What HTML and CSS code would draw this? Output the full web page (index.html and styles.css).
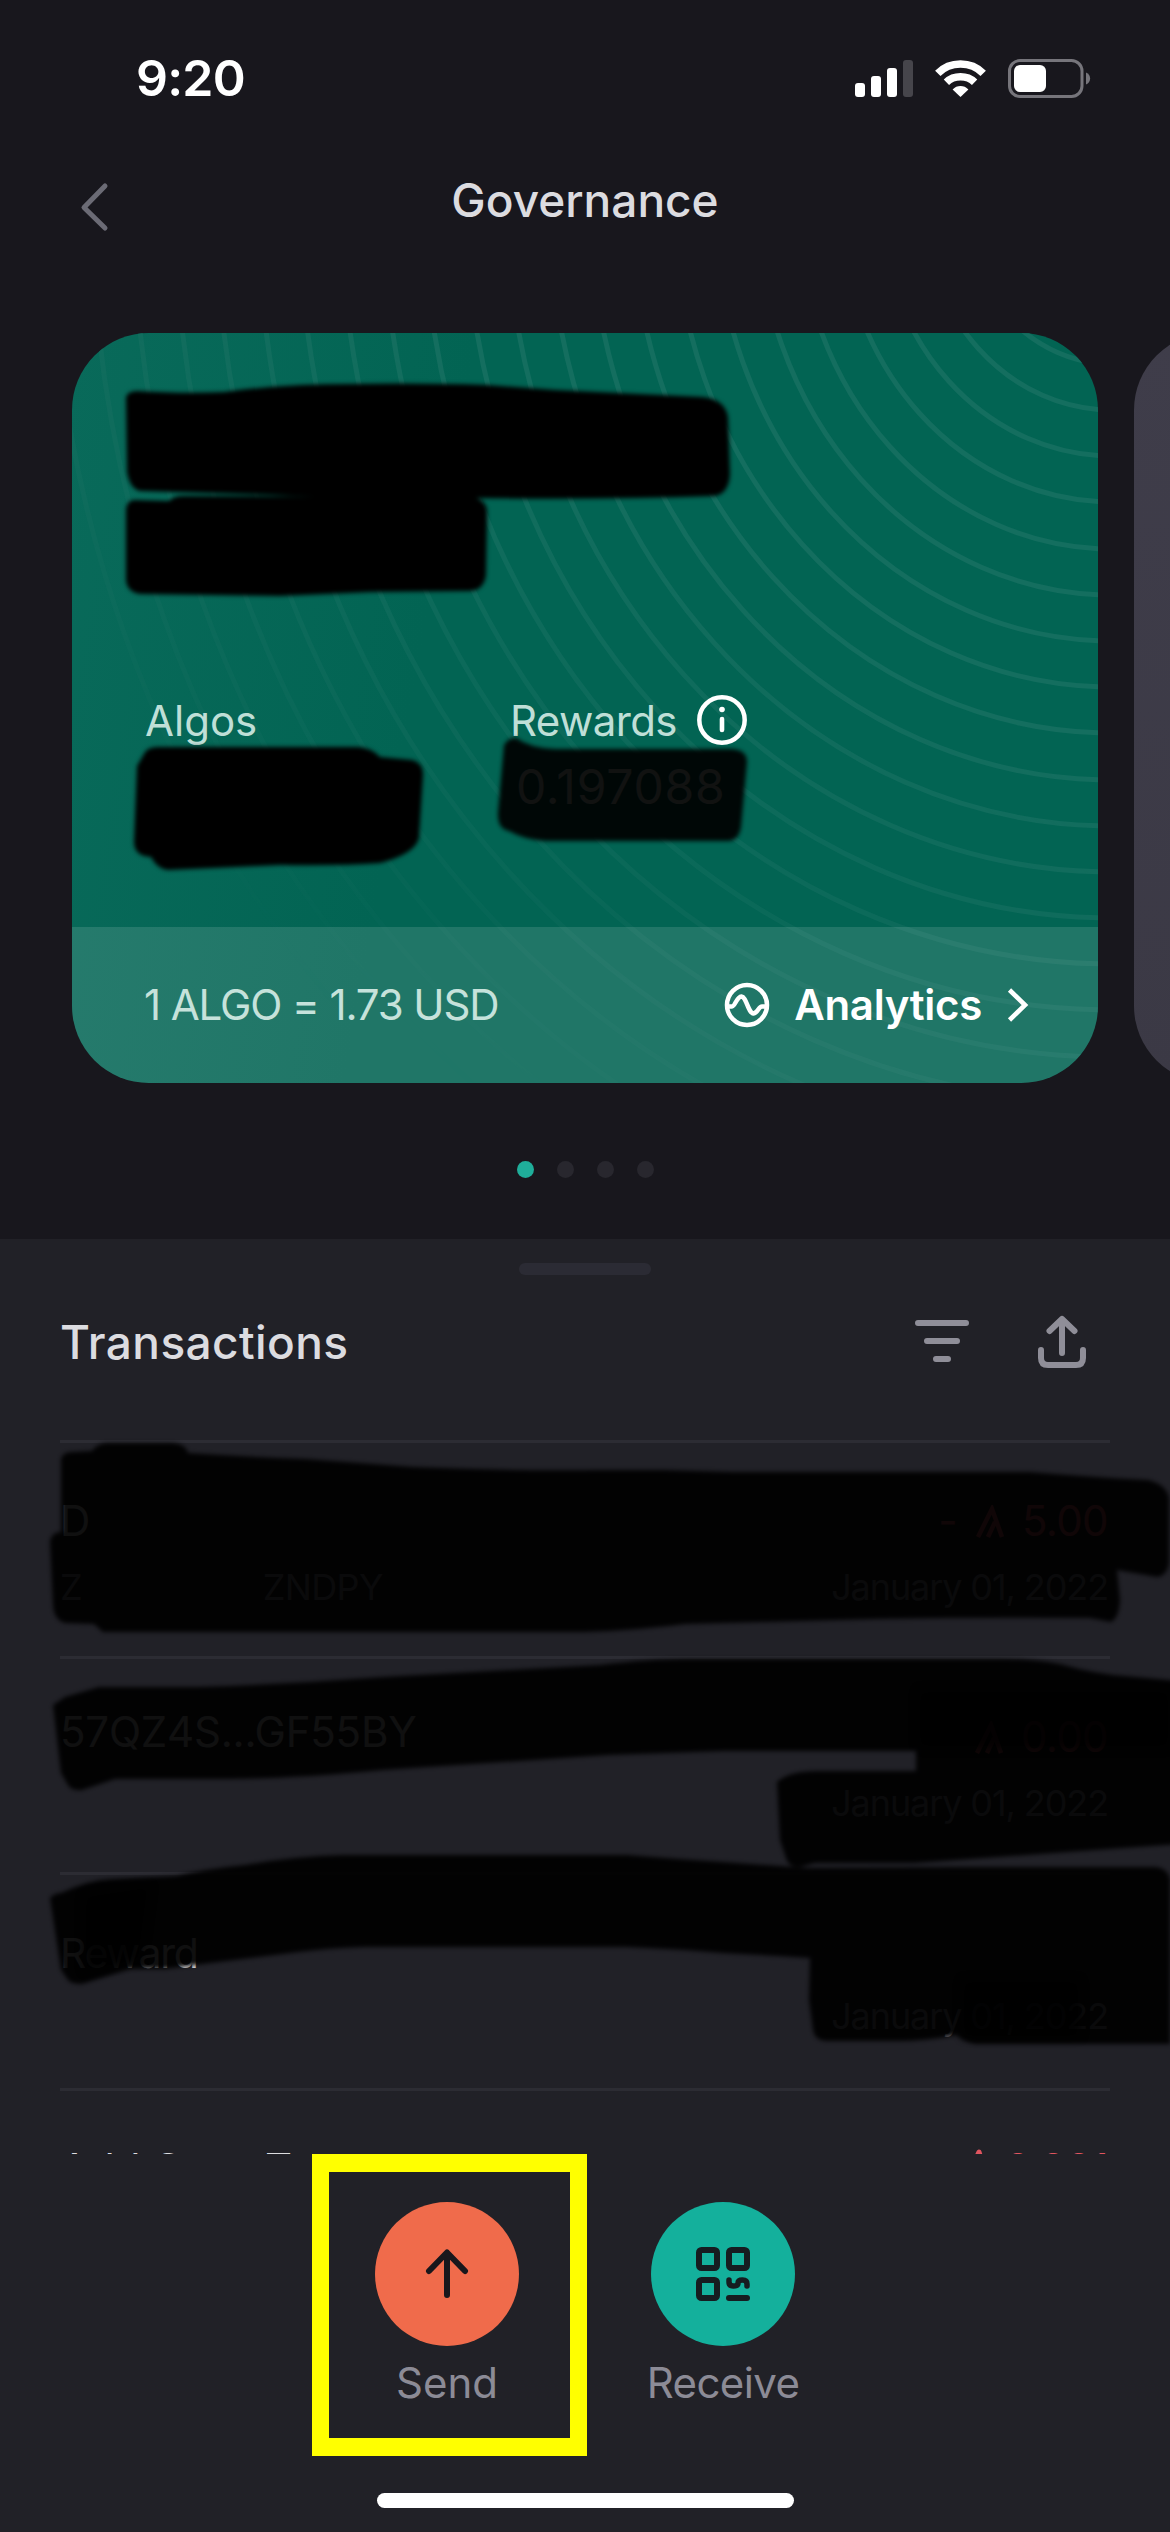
FILE: index.html
```html
<!DOCTYPE html>
<html lang="en">
<head>
<meta charset="utf-8">
<title>Governance</title>
<link rel="stylesheet" href="styles.css">
</head>
<body>
<div class="screen">
  <header class="status">
    <span class="time">9:20</span>
    <div class="status-icons">
      <svg class="signal" width="58" height="37" viewBox="0 0 58 37"><g fill="#fff"><rect x="0" y="23" width="10" height="14" rx="3"/><rect x="16" y="16" width="10" height="21" rx="3"/><rect x="32" y="8" width="10" height="29" rx="3"/></g><rect x="48" y="0" width="10" height="37" rx="3" fill="#46454b"/></svg>
      <svg class="wifi" width="51" height="37" viewBox="0 0 51 37"><g fill="none" stroke="#fff" stroke-width="7.6"><path d="M2.8 13.3Q12 4 25.5 4T48.2 13.3"/><path d="M11.4 22.2Q17 16.8 25.5 16.8T39.6 22.2"/></g><path d="M17.6 29.4Q21 26 25.5 26T33.4 29.4L25.5 37Z" fill="#fff"/></svg>
      <svg class="battery" width="83" height="39" viewBox="0 0 83 39"><rect x="1.5" y="1.5" width="72.500" height="36" rx="10.500" fill="none" stroke="#76757b" stroke-width="3"/><rect x="6" y="6" width="32" height="27" rx="6" fill="#fff"/><path d="M78 13.500C83.500 15.500 83.500 23.500 78 25.500Z" fill="#76757b"/></svg>
    </div>
  </header>

  <nav class="nav">
    <svg class="back" width="30" height="50" viewBox="0 0 30 50"><path d="M26 4L5 25.500L26 46" fill="none" stroke="#6b6b75" stroke-width="5" stroke-linecap="round" stroke-linejoin="round"/></svg>
    <h1 class="nav-title">Governance</h1>
  </nav>

  <section class="carousel">
    <article class="card">
      <svg class="rings" width="1026" height="750" viewBox="0 0 1026 750">
        <defs>
        <mask id="ringMask"><rect width="1026" height="750" fill="url(#maskFade)"/></mask>
        <linearGradient id="maskFade" gradientUnits="userSpaceOnUse" x1="260" y1="750" x2="620" y2="180"><stop offset="0.1" stop-color="#000"/><stop offset="1" stop-color="#fff"/></linearGradient></defs>
        <g class="ring-lines" mask="url(#ringMask)">
          <ellipse cx="1040" cy="-133" rx="148" ry="164"/><ellipse cx="1040" cy="-133" rx="189" ry="210"/><ellipse cx="1040" cy="-133" rx="231" ry="256"/><ellipse cx="1040" cy="-133" rx="272" ry="302"/><ellipse cx="1040" cy="-133" rx="314" ry="349"/><ellipse cx="1040" cy="-133" rx="355" ry="395"/><ellipse cx="1040" cy="-133" rx="397" ry="441"/><ellipse cx="1040" cy="-133" rx="438" ry="487"/><ellipse cx="1040" cy="-133" rx="480" ry="533"/><ellipse cx="1040" cy="-133" rx="522" ry="580"/><ellipse cx="1040" cy="-133" rx="563" ry="626"/><ellipse cx="1040" cy="-133" rx="605" ry="672"/><ellipse cx="1040" cy="-133" rx="646" ry="718"/><ellipse cx="1040" cy="-133" rx="688" ry="764"/><ellipse cx="1040" cy="-133" rx="729" ry="810"/><ellipse cx="1040" cy="-133" rx="771" ry="857"/><ellipse cx="1040" cy="-133" rx="813" ry="903"/><ellipse cx="1040" cy="-133" rx="854" ry="949"/><ellipse cx="1040" cy="-133" rx="896" ry="995"/><ellipse cx="1040" cy="-133" rx="937" ry="1041"/><ellipse cx="1040" cy="-133" rx="979" ry="1088"/><ellipse cx="1040" cy="-133" rx="1020" ry="1134"/><ellipse cx="1040" cy="-133" rx="1062" ry="1180"/>
        </g>
      </svg>
      <div class="card-body">
        <div class="metric">
          <div class="metric-label"><span>Algos</span></div>
        </div>
        <div class="metric">
          <div class="metric-label"><span class="t-rewards">Rewards</span>
            <svg class="info" width="50" height="50" viewBox="0 0 50 50"><circle cx="25" cy="25" r="22.700" fill="none" stroke="#fff" stroke-width="4.500"/><circle cx="25" cy="14.500" r="2.800" fill="#fff"/><path d="M25 24V35" stroke="#fff" stroke-width="4.600" stroke-linecap="round"/></svg>
          </div>
          <div class="metric-value">0.197088</div>
        </div>
      </div>
      <footer class="card-foot">
        <span class="rate">1 ALGO = 1.73 USD</span>
        <div class="analytics">
          <svg width="46" height="46" viewBox="0 0 46 46"><g fill="none" stroke="#fff" stroke-width="4.500" stroke-linejoin="round"><circle cx="23" cy="23" r="20"/><path d="M4 24.500H8C11 24.500 12.500 15 17.500 14.500C22.500 15 24 31 29.500 31.500C34 31 34.500 24.500 38 24.500H42"/></g></svg>
          <span class="analytics-label">Analytics</span>
          <svg width="22" height="34" viewBox="0 0 22 34"><path d="M2.500 2L18 17L2.500 32" fill="none" stroke="#fff" stroke-width="4.600"/></svg>
        </div>
      </footer>
    </article>
    <article class="card next"></article>
  </section>

  <div class="dots"><i class="dot on"></i><i class="dot"></i><i class="dot"></i><i class="dot"></i></div>

  <main class="sheet">
    <div class="handle"></div>
    <div class="sheet-head">
      <h2 class="sheet-title">Transactions</h2>
      <div class="tools">
        <svg width="54" height="54" viewBox="0 0 54 54"><g stroke="#8f8e98" stroke-width="6" stroke-linecap="round"><path d="M3 8H51M12 26H42M21 44H33"/></g></svg>
        <svg width="48" height="56" viewBox="0 0 48 56"><g fill="none" stroke="#8f8e98" stroke-width="6" stroke-linecap="round" stroke-linejoin="round"><path d="M24 39V6M11.500 17L24 5L36.500 17"/><path d="M3 36V44Q3 51 10 51H38Q45 51 45 44V36"/></g></svg>
      </div>
    </div>
    <div class="list">
      <div class="row">
        <div class="who"><span class="name">D</span><span class="sub"><span>Z</span><span class="tail">ZNDPY</span></span></div>
        <div class="what"><span class="amount"><span class="minus">-</span><svg width="29" height="33" viewBox="0 0 29 33"><path d="M2 32L16 4L26 32M12 32L19 17" fill="none" stroke="#e0555f" stroke-width="4.500"/></svg><span>5.00</span></span><span class="date">January 01, 2022</span></div>
      </div>
      <div class="row">
        <div class="who single"><span class="name addr">57QZ4S...GF55BY</span></div>
        <div class="what"><span class="amount"><svg width="29" height="33" viewBox="0 0 29 33"><path d="M2 32L16 4L26 32M12 32L19 17" fill="none" stroke="#e0555f" stroke-width="4.500"/></svg><span>0.00</span></span><span class="date">January 01, 2022</span></div>
      </div>
      <div class="row raised">
        <div class="who"><span class="name reward">Reward</span></div>
        <div class="what"><span class="amount"></span><span class="date">January 01, 2022</span></div>
      </div>
      <div class="row">
        <div class="who"><span class="name cut"><span>Add C</span><span class="second">T</span></span></div>
        <div class="what"><span class="amount"><svg class="peek" width="29" height="36" viewBox="0 0 29 36"><path d="M2 35L16 4L26 35M12 35L19 18" fill="none" stroke="#e0555f" stroke-width="5" stroke-linejoin="round"/></svg><span>0.001</span></span></div>
      </div>
    </div>
  </main>

  <div class="actions">
    <div class="action">
      <div class="round send"><svg width="48" height="54" viewBox="0 0 48 54"><path d="M24 48V6M6 24L24 5.500L42 24" fill="none" stroke="#19171c" stroke-width="6" stroke-linecap="round" stroke-linejoin="round"/></svg></div>
      <span class="action-label">Send</span>
      <div class="highlight"></div>
    </div>
    <div class="action">
      <div class="round receive"><svg width="54" height="54" viewBox="0 0 54 54"><g fill="none" stroke="#161c20" stroke-width="6" stroke-linecap="round" stroke-linejoin="round"><rect x="3" y="3" width="18" height="18" rx="2.500"/><rect x="33" y="3" width="18" height="18" rx="2.500"/><rect x="3" y="33" width="18" height="18" rx="2.500"/><path d="M33 51H51"/><path d="M33 33V35Q33 39 37.500 39T42 36T46.500 33T51 37V39" stroke-width="5.500"/></g></svg></div>
      <span class="action-label t-receive">Receive</span>
    </div>
  </div>

  <div class="home"></div>

  <svg class="marker" width="1170" height="2532" viewBox="0 0 1170 2532">
    <g class="ink solid">
      <path d="M126 397Q128 391 137 391Q185 394 224 392Q260 387 302 385Q400 382 486 385L555 390L702 397Q725 399 728 417L730 474Q729 494 714 496Q600 500 463 498Q360 500 270 495L140 491Q130 489 127 472Z"/>
      <path d="M126 509Q127 500 135 500L169 501Q174 496 183 496L472 497Q487 500 487 512L486 575Q484 590 470 591L371 592L280 596L140 594Q127 592 126 580Z"/>
      <path d="M144 754Q147 747 158 747H358Q372 748 380 757L412 760Q424 763 423 776L419 838Q415 854 380 863Q340 866 280 865L168 870Q157 869 151 857Q134 856 134 842L137 766Z"/>
    </g>
    <g class="ink">
      <path d="M504 745Q509 737 516 738Q530 748 555 749H732Q747 750 747 762L741 827Q739 840 729 841H546Q525 840 509 831Q497 829 498 812Z"/>
      <path d="M61 1460Q62 1452 72 1452L92 1451Q98 1443 108 1443H172Q186 1444 188 1453Q250 1457 306 1459L413 1467Q510 1471 600 1470H662L731 1472H1029Q1090 1477 1148 1480Q1166 1484 1169 1498V1563Q1167 1576 1157 1577L1117 1570L1120 1600Q1119 1618 1111 1622L1090 1618Q980 1617 876 1619L685 1624Q620 1632 570 1632H103L94 1624L65 1623Q54 1620 53 1605L50 1541Q52 1532 61 1532Z"/>
      <path d="M53 1705L65 1697L99 1687H199Q290 1684 383 1677L600 1665Q650 1659 685 1659H1002Q1035 1659 1060 1664Q1095 1674 1125 1676L1180 1681V1844L1067 1852L914 1863H815L800 1867Q789 1868 786 1858L780 1840L777 1782Q790 1770 823 1771H916V1751H723L608 1755L383 1770Q290 1779 222 1779H115L82 1790Q71 1791 68 1785L61 1773Z"/>
      <path d="M50 1898Q55 1893 61 1893Q88 1880 111 1879L176 1876Q205 1869 245 1865Q295 1856 344 1855H627Q675 1859 723 1862L807 1868L972 1867H1155Q1168 1868 1170 1880V2044H976Q966 2043 956 2035Q928 2041 895 2041H826Q814 2040 813 2030L809 2000L810 1958Q765 1955 723 1953Q675 1949 627 1947H364Q330 1948 298 1952L210 1963L165 1969H130L82 1984Q71 1984 68 1980L61 1970Z"/>
    </g>
    <g class="ink second-pass"><path d="M918 1690H1170V1748H918Z"/><path d="M84 1895L150 1885L140 1962L84 1972Z"/><path d="M962 1980H1080V2038H962Z"/></g>
  </svg>
</div>
</body>
</html>
```
FILE: styles.css
```css
* { box-sizing: border-box; margin: 0; padding: 0; }
body { background: #18171d; font-family: Inter, "Liberation Sans", sans-serif; }
svg { display: block; flex: none; }
.screen { position: relative; width: 1170px; height: 2532px; overflow: hidden; background: #18171d; display: flex; flex-direction: column; white-space: nowrap; }

.status { height: 156px; padding: 0 79px 0 136px; display: flex; align-items: center; justify-content: space-between; }
.time { font-size: 50px; font-weight: 600; line-height: 60px; color: #fff; letter-spacing: -0.8px; }
.status-icons { display: flex; align-items: center; }
.wifi { margin-left: 22px; }
.battery { margin-left: 22px; }

.nav { height: 88px; position: relative; display: flex; align-items: center; justify-content: center; }
.nav-title { font-size: 46px; line-height: 56px; font-weight: 500; color: #dcdce0; }
.back { position: absolute; left: 79px; top: 26px; }

.carousel { margin-top: 89px; padding-left: 72px; display: flex; gap: 36px; }
.card { position: relative; flex: none; width: 1026px; height: 750px; border-radius: 77px; overflow: hidden; background: linear-gradient(100deg, #096a5a 0%, #026453 35%, #026453 100%); display: flex; flex-direction: column; }
.card.next { background: linear-gradient(#3f3d4a, #3b3945); }
.rings { position: absolute; left: 0; top: 0; }
.ring-lines { fill: none; stroke: #146e5f; stroke-width: 5; }
.card-body { position: relative; flex: 1; padding: 367px 0 0 73px; display: flex; }
.metric { width: 366px; }
.metric-label { display: flex; align-items: center; height: 42px; font-size: 42px; line-height: 42px; color: #bfdfd7; }
.t-rewards { letter-spacing: -0.6px; margin-left: -1px; }
.info { margin: -2px 0 0 20px; }
.metric-value { margin: 21px 0 0 5px; font-size: 48px; line-height: 48px; letter-spacing: 0.8px; color: #e6f3f0; }
.card-foot { position: relative; height: 156px; padding: 0 69px 0 72px; background: rgba(255,255,255,.12); display: flex; align-items: center; justify-content: space-between; }
.rate { font-size: 42px; line-height: 50px; letter-spacing: -1.1px; color: #c6e2db; }
.analytics { display: flex; align-items: center; }
.analytics-label { margin: 0 25px 0 24px; font-size: 42px; line-height: 50px; font-weight: 600; letter-spacing: -0.3px; color: #fff; }

.dots { height: 156px; padding: 16px 0 0 1px; display: flex; align-items: center; justify-content: center; gap: 23px; }
.dot { width: 17px; height: 17px; border-radius: 50%; background: #28272e; }
.dot.on { background: #1fae9a; }

.sheet { height: 915px; background: #212127; padding: 24px 60px 0; }
.handle { width: 132px; height: 12px; border-radius: 6px; background: #2b2b34; margin: 0 auto; }
.sheet-head { height: 134px; margin-bottom: 31px; display: flex; align-items: center; justify-content: space-between; padding-right: 24px; }
.sheet-title { font-size: 46px; line-height: 56px; font-weight: 500; letter-spacing: 0.4px; color: #dcdce0; }
.tools { display: flex; align-items: center; gap: 69px; }
.list { height: 714px; overflow: hidden; }
.row { height: 216px; border-top: 3px solid #2c2c33; padding: 57px 2px 0 0; display: flex; justify-content: space-between; align-items: flex-start; }
.who, .what { display: flex; flex-direction: column; }
.what { align-items: flex-end; }
.who.single { margin-top: -5px; }
.name { height: 42px; font-size: 42px; line-height: 42px; color: #dcdce0; }
.addr { letter-spacing: -0.2px; }
.reward { font-size: 41px; letter-spacing: -1.3px; }
.sub, .date { height: 36px; margin-top: 27px; font-size: 36px; line-height: 36px; color: #8c8b96; display: flex; }
.date { letter-spacing: -1.1px; }
.tail { margin-left: 180px; letter-spacing: -0.6px; }
.amount { height: 42px; display: flex; align-items: center; font-size: 42px; line-height: 42px; letter-spacing: -0.6px; color: #e0555f; }
.amount svg { margin-right: 17px; }
.amount .peek { margin-bottom: 6px; margin-right: 12px; }
.minus { margin-right: 19px; }
.raised .date { margin-top: 24px; }
.cut { display: flex; }
.second { margin-left: 82px; }

.actions { height: 302px; background: #212127; display: flex; justify-content: center; }
.action { position: relative; width: 276px; padding-top: 48px; display: flex; flex-direction: column; align-items: center; }
.round { width: 144px; height: 144px; border-radius: 50%; display: flex; align-items: center; justify-content: center; }
.send { background: #f06b4b; }
.receive { background: #14b09c; }
.action-label { margin-top: 16px; font-size: 42px; line-height: 42px; color: #8c8b96; }
.t-receive { letter-spacing: -0.6px; }
.highlight { position: absolute; left: 3px; top: 0; width: 275px; height: 302px; border: 17px solid #ff0; border-top-width: 18px; border-bottom-width: 18px; }
.home { flex: 1; background: #212127; display: flex; justify-content: center; padding-top: 37px; }
.home::before { content: ""; width: 417px; height: 15px; border-radius: 8px; background: #fff; }

.marker { position: absolute; left: 0; top: 0; pointer-events: none; }
.ink { fill: #000; opacity: .925; filter: blur(2.2px); }
.ink.solid { opacity: .995; }
.ink.second-pass { opacity: .7; filter: blur(4px); }
```
